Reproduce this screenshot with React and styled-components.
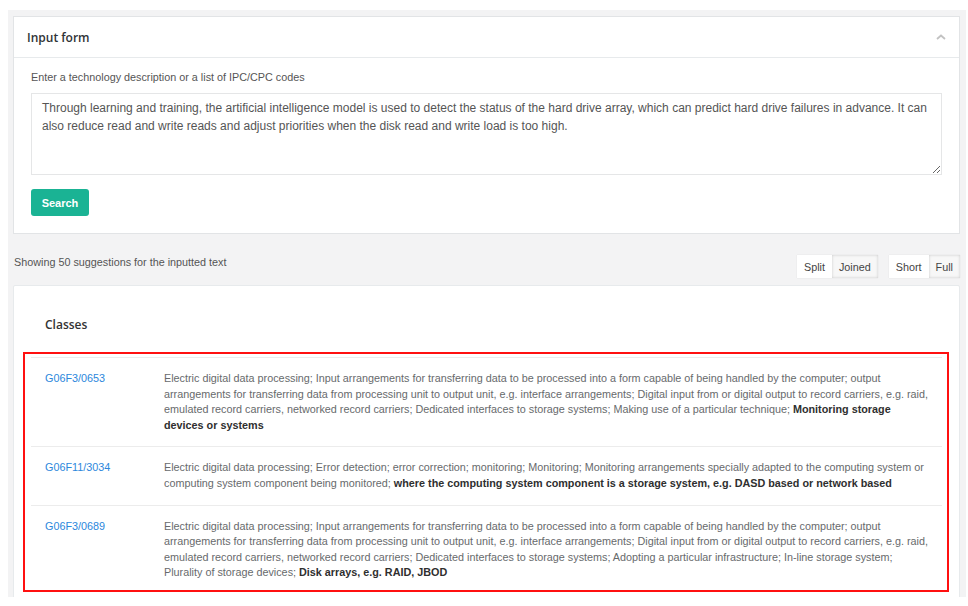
import React from "react";
import styled, { createGlobalStyle } from "styled-components";

const GlobalStyle = createGlobalStyle`
  body {
    margin: 8px 2px 8px 8px;
    background: #ffffff;
    font-family: "Liberation Sans", Arial, sans-serif;
    color: #676a6c;
  }
  * { box-sizing: border-box; }
`;

const classes = [
  {
    code: "G06F3/0653",
    text: "Electric digital data processing; Input arrangements for transferring data to be processed into a form capable of being handled by the computer; output arrangements for transferring data from processing unit to output unit, e.g. interface arrangements; Digital input from or digital output to record carriers, e.g. raid, emulated record carriers, networked record carriers; Dedicated interfaces to storage systems; Making use of a particular technique; ",
    bold: "Monitoring storage devices or systems",
  },
  {
    code: "G06F11/3034",
    text: "Electric digital data processing; Error detection; error correction; monitoring; Monitoring; Monitoring arrangements specially adapted to the computing system or computing system component being monitored; ",
    bold: "where the computing system component is a storage system, e.g. DASD based or network based",
  },
  {
    code: "G06F3/0689",
    text: "Electric digital data processing; Input arrangements for transferring data to be processed into a form capable of being handled by the computer; output arrangements for transferring data from processing unit to output unit, e.g. interface arrangements; Digital input from or digital output to record carriers, e.g. raid, emulated record carriers, networked record carriers; Dedicated interfaces to storage systems; Adopting a particular infrastructure; In-line storage system; Plurality of storage devices; ",
    bold: "Disk arrays, e.g. RAID, JBOD",
  },
];

const App = () => {
  return (
    <>
      <GlobalStyle />
      <Page>
        <Panel>
          <PanelHeader>
            <Title>Input form</Title>
            <svg width="10" height="6" viewBox="0 0 10 6">
              <path d="M1 5 L5 1.5 L9 5" fill="none" stroke="#c2c2c2" strokeWidth="1.8" />
            </svg>
          </PanelHeader>
          <PanelBody>
            <Label>Enter a technology description or a list of IPC/CPC codes</Label>
            <TextArea
              defaultValue="Through learning and training, the artificial intelligence model is used to detect the status of the hard drive array, which can predict hard drive failures in advance. It can also reduce read and write reads and adjust priorities when the disk read and write load is too high."
            />
            <SearchButton>Search</SearchButton>
          </PanelBody>
        </Panel>

        <ResultBar>
          <Summary>Showing 50 suggestions for the inputted text</Summary>
          <Groups>
            <Group>
              <ToggleBtn>Split</ToggleBtn>
              <ToggleBtn active>Joined</ToggleBtn>
            </Group>
            <Group>
              <ToggleBtn>Short</ToggleBtn>
              <ToggleBtn active>Full</ToggleBtn>
            </Group>
          </Groups>
        </ResultBar>

        <ResultsPanel>
          <SectionTitle>Classes</SectionTitle>
          <Highlight>
            <ClassTable>
              {classes.map((c) => (
                <Row key={c.code}>
                  <Code href="#">{c.code}</Code>
                  <Desc>
                    {c.text}
                    <strong>{c.bold}</strong>
                  </Desc>
                </Row>
              ))}
            </ClassTable>
          </Highlight>
        </ResultsPanel>
      </Page>
    </>
  );
};

export default App;

const Page = styled.div`
  margin-top: 2px;
  height: 587px;
  overflow: hidden;
  background: #f3f3f4;
  padding: 6px 6px 0 5px;
`;

const Panel = styled.div`
  background: #fff;
  border: 1px solid #e2e4e6;
`;

const PanelHeader = styled.div`
  display: flex;
  align-items: center;
  justify-content: space-between;
  padding: 0 13px 0 13px;
  height: 41px;
  border-bottom: 1px solid #e7eaec;
`;

const Title = styled.h5`
  margin: 0;
  font-family: "Open Sans", sans-serif;
  font-size: 12px;
  font-weight: 600;
  color: #2f3336;
`;

const PanelBody = styled.div`
  padding: 12px 17px 17px;
`;

const Label = styled.div`
  font-size: 10.8px;
  line-height: 15px;
  color: #555;
`;

const TextArea = styled.textarea`
  display: block;
  width: 100%;
  height: 82px;
  margin-top: 8px;
  padding: 5px 10px;
  border: 1px solid #e5e6e7;
  font-family: "Liberation Sans", Arial, sans-serif;
  font-size: 12px;
  line-height: 18px;
  color: #555;
  resize: vertical;
  outline: none;
`;

const SearchButton = styled.button`
  margin-top: 14px;
  width: 58px;
  height: 27px;
  border: none;
  border-radius: 3px;
  background: #1ab394;
  color: #fff;
  font-family: "Liberation Sans", Arial, sans-serif;
  font-size: 11px;
  font-weight: bold;
  cursor: pointer;
`;

const ResultBar = styled.div`
  display: flex;
  justify-content: space-between;
  align-items: flex-start;
  margin: 21px 0 7px;
`;

const Summary = styled.div`
  margin-left: 1px;
  font-size: 10.8px;
  line-height: 15px;
  color: #555;
`;

const Groups = styled.div`
  display: flex;
  gap: 11px;
`;

const Group = styled.div`
  display: flex;
  box-shadow: 0 0 1px rgba(0, 0, 0, 0.12);
`;

const ToggleBtn = styled.button`
  height: 23px;
  padding: 0 7px;
  border: none;
  background: ${(p) => (p.active ? "#f7f7f7" : "#fff")};
  box-shadow: ${(p) => (p.active ? "inset 0 0 3px rgba(0,0,0,0.18)" : "none")};
  font-family: "Liberation Sans", Arial, sans-serif;
  font-size: 10.8px;
  color: #444;
  cursor: pointer;
`;

const ResultsPanel = styled.div`
  background: #fff;
  border: 1px solid #e7eaec;
  border-radius: 2px;
  padding: 31px 17px 10px;
`;

const SectionTitle = styled.h4`
  margin: 0 0 19px 14px;
  font-family: "Open Sans", sans-serif;
  font-size: 12px;
  line-height: 16px;
  font-weight: 600;
  color: #333;
`;

const Highlight = styled.div`
  margin: 0 -7px 0 -8px;
  padding: 3px 5px 0 6px;
  border: 2px solid #ff1010;
`;

const ClassTable = styled.div`
  display: flex;
  flex-direction: column;
`;

const Row = styled.div`
  display: grid;
  grid-template-columns: 119px 1fr;
  border-top: 1px solid #ececec;
  padding: 13px 0 13px;

  &:last-child {
    padding-bottom: 9px;
  }
`;

const Code = styled.a`
  padding-left: 14px;
  font-size: 10.8px;
  line-height: 15.6px;
  color: #2b87dc;
  text-decoration: none;
`;

const Desc = styled.div`
  padding: 0 14px;
  font-size: 10.8px;
  line-height: 15.6px;
  color: #676a6c;

  strong {
    color: #2f2f2f;
  }
`;
